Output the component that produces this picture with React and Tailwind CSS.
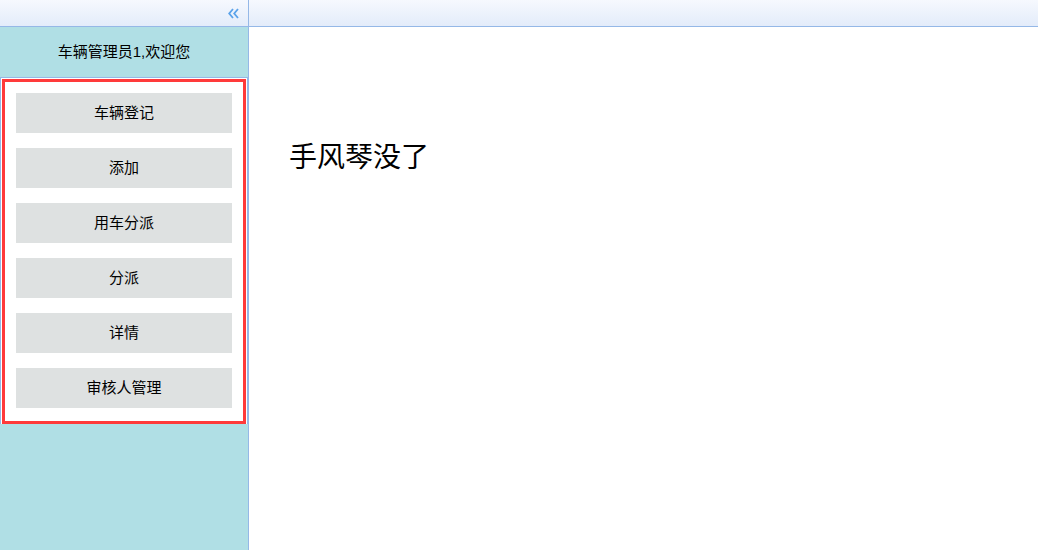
import React from 'react';

const menu = ['车辆登记', '添加', '用车分派', '分派', '详情', '审核人管理'];

const App = () => {
  return (
    <div className="flex h-[550px] w-[1038px] flex-col bg-white" style={{ fontFamily: '"Liberation Sans", "Noto Sans CJK SC", sans-serif' }}>
      {/* Top bar */}
      <div className="flex h-[27px] shrink-0 border-b border-[#95b8e7] bg-gradient-to-b from-[#f6f9fe] to-[#e3ecfa]">
        <div className="flex w-[249px] items-center justify-end border-r border-[#95b8e7] pr-[9px]">
          <svg width="11" height="11" viewBox="0 0 11 11" fill="none" stroke="#5aa2ea" strokeWidth="1.8">
            <path d="M5 1 L1.2 5.5 L5 10" />
            <path d="M10 1 L6.2 5.5 L10 10" />
          </svg>
        </div>
        <div className="flex-1" />
      </div>

      <div className="flex flex-1">
        {/* Sidebar */}
        <div className="flex w-[249px] flex-col border-r border-[#95b8e7] bg-[#b0dfe5]">
          <div className="flex h-[50px] items-center justify-center text-[15px] text-black">
            车辆管理员1,欢迎您
          </div>
          <div className="border-x border-t border-[#95b8e7] bg-white p-px pb-0">
            <div className="flex flex-col items-center gap-[15px] border-[3px] border-[#ff3a3a] pb-[13px] pt-[11px]">
              {menu.map((item) => (
                <div key={item} className="flex h-10 w-[216px] items-center justify-center bg-[#dee1e1] text-[15px] text-black">
                  {item}
                </div>
              ))}
            </div>
          </div>
        </div>

        {/* Main */}
        <div className="flex-1 pl-10 pt-[112px]">
          <h1 className="text-[28px] leading-[38px] text-black">手风琴没了</h1>
        </div>
      </div>
    </div>
  );
};

export default App;
